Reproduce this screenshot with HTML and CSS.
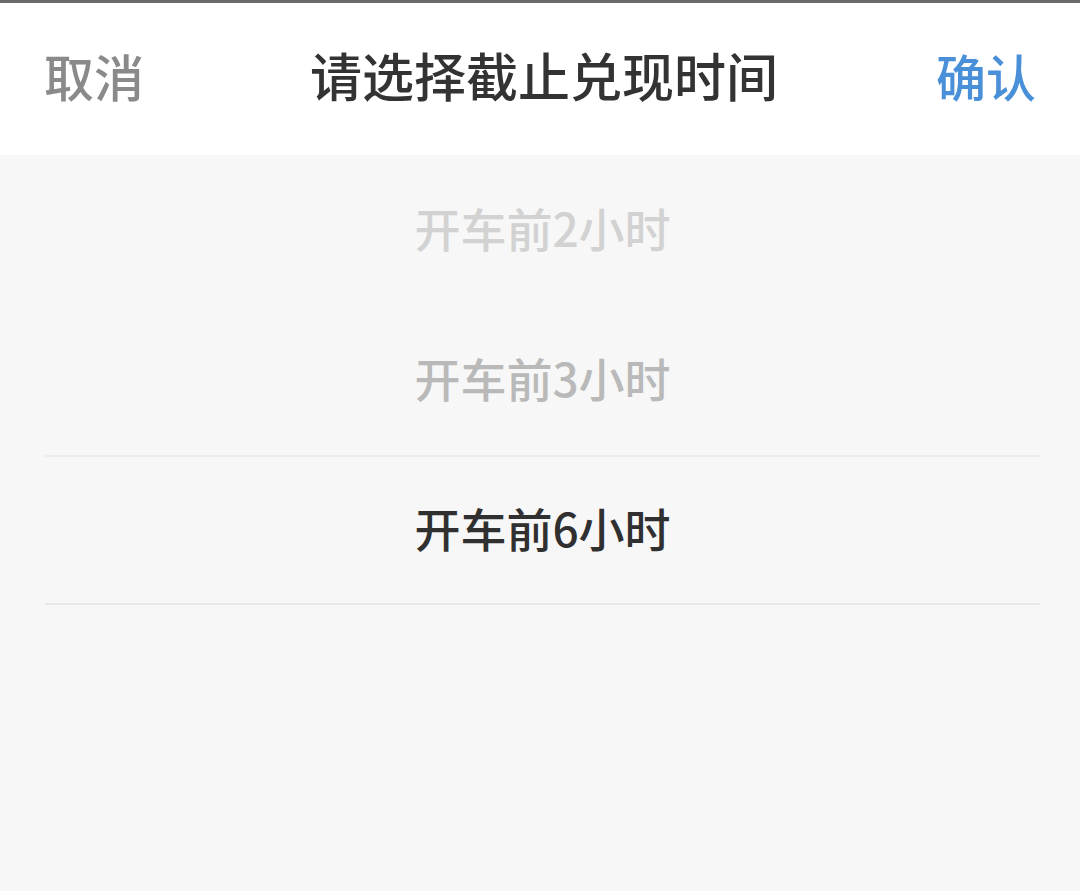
FILE: index.html
```html
<!DOCTYPE html>
<html lang="zh-CN">
<head>
    <meta charset="UTF-8">
    <meta name="viewport" content="width=device-width, initial-scale=1.0">
    <link rel="stylesheet" href="styles.css">
    <title>请选择截止兑现时间</title>
</head>
<body>
    <div class="topbar"></div>
    <div class="header">
        <span class="btn cancel">取消</span>
        <span class="title">请选择截止兑现时间</span>
        <span class="btn confirm">确认</span>
    </div>
    <div class="picker">
        <div class="item far">开车前2小时</div>
        <div class="item near">开车前3小时</div>
        <div class="item selected">开车前6小时</div>
    </div>
</body>
</html>
```

FILE: styles.css
```css
body{
    margin: 0px;
    height: 891px;
    overflow: hidden;
    background: #f7f7f7;
    font-family: "Noto Sans CJK SC", "Noto Sans", sans-serif;
}
.topbar{
    height: 3px;
    background: #6a6a6a;
}
.header{
    height: 152px;
    background: #ffffff;
    display: flex;
    align-items: center;
    justify-content: space-between;
    padding: 0px 44px 8px 44px;
    box-sizing: border-box;
}
.btn{
    font-size: 50px;
    line-height: 1;
    font-weight: 500;
}
.cancel{
    color: #8a8a8a;
}
.confirm{
    color: #4a90d9;
}
.title{
    font-size: 52px;
    line-height: 1;
    font-weight: 500;
    color: #333333;
    margin-left: 8px;
}
.picker{
    background: #f7f7f7;
    padding: 0px 40px 0px 45px;
}
.item{
    height: 150px;
    display: flex;
    align-items: center;
    justify-content: center;
    font-size: 46px;
    font-weight: 500;
    padding-bottom: 6px;
    box-sizing: border-box;
}
.far{
    color: #d2d2d2;
}
.near{
    color: #b9b9b9;
}
.selected{
    color: #303030;
    border-top: 2px solid #ececec;
    border-bottom: 2px solid #e8e8e8;
}
```
